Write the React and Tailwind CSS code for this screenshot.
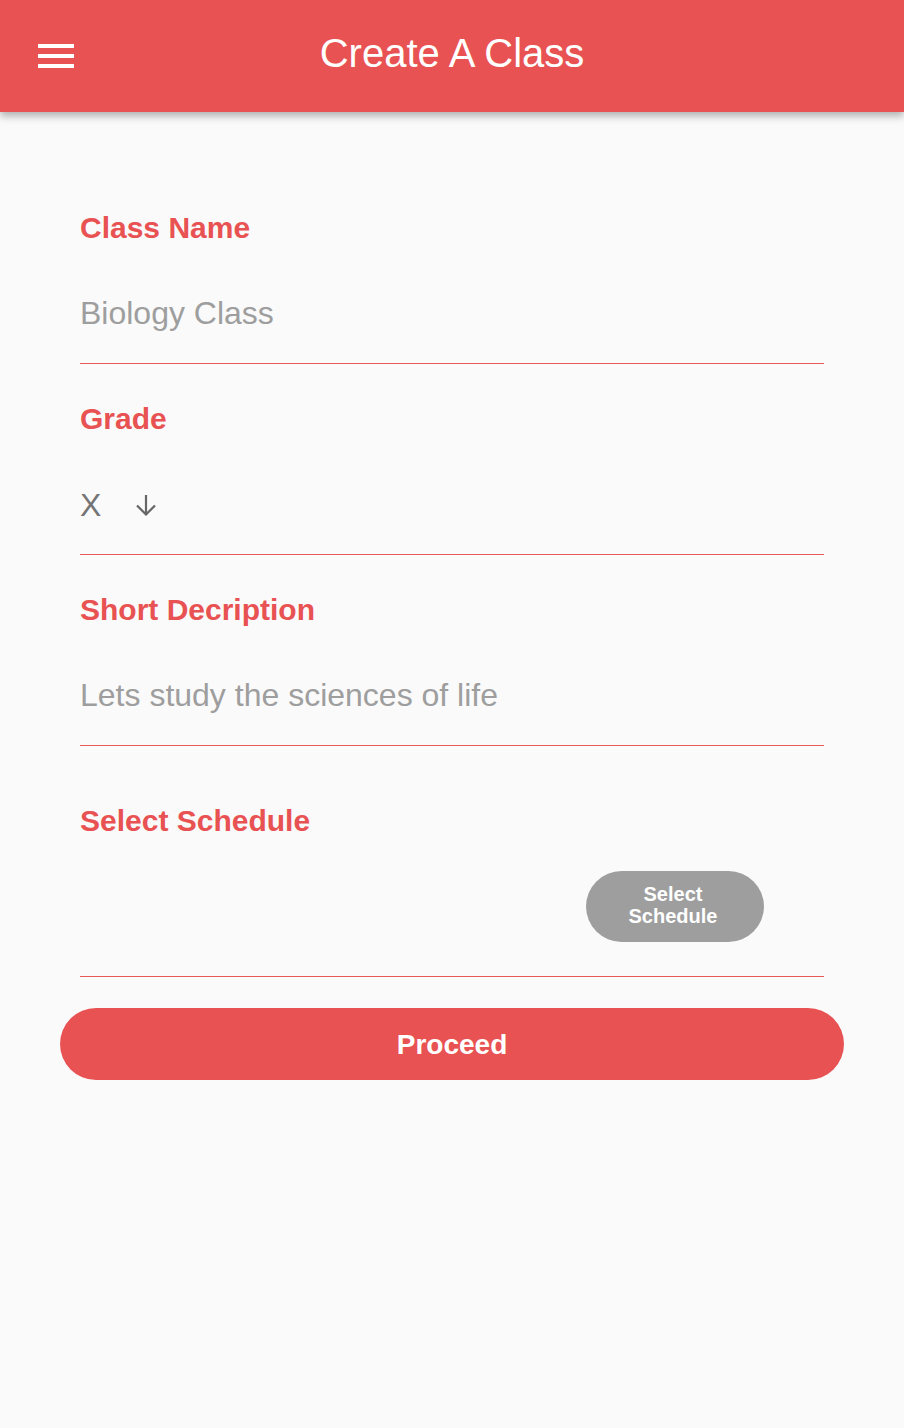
const font = { fontFamily: '"Liberation Sans", Arial, sans-serif' }

// one labelled field with a red underline
const Field = ({ label, children, className = '' }) => (
  <div className={`border-b border-[#e85a5a] ${className}`}>
    <div className="h-8 text-[30px] leading-8 font-bold text-[#e85252]">{label}</div>
    {children}
  </div>
)

const App = () => {
  return (
    <div className="min-h-[1428px] w-full bg-[#fafafa]" style={font}>
      {/* Barra superior */}
      <header className="relative h-[112px] bg-[#e85252] shadow-[0_4px_8px_rgba(0,0,0,0.3)] flex items-center justify-center">
        <button className="absolute left-[38px] top-[44px] flex flex-col gap-[6px]">
          <span className="block w-9 h-1 bg-white" />
          <span className="block w-9 h-1 bg-white" />
          <span className="block w-9 h-1 bg-white" />
        </button>
        <h1 className="text-[40px] leading-none text-white -mt-[7px]">Create A Class</h1>
      </header>

      <main className="px-20 pt-[100px]">
        <Field label="Class Name">
          <div className="pt-[51px] pb-8 text-[32px] leading-9 text-[#9e9e9e]">Biology Class</div>
        </Field>

        <Field label="Grade" className="mt-[39px]">
          <div className="pt-[52px] pb-[31px] h-[119px] flex items-center gap-[34px] text-[32px] leading-9 text-[#757575]">
            <span>X</span>
            <svg width="22" height="22" viewBox="0 0 22 22" fill="none" stroke="#666" strokeWidth="2.2">
              <path d="M11 1v19" />
              <path d="M2 11.5l9 9 9-9" />
            </svg>
          </div>
        </Field>

        <Field label="Short Decription" className="mt-[39px]">
          <div className="pt-[51px] pb-8 text-[32px] leading-9 text-[#9e9e9e]">Lets study the sciences of life</div>
        </Field>

        <Field label="Select Schedule" className="mt-[59px]">
          <div className="pt-[34px] pb-[34px] flex justify-end pr-[60px]">
            <button className="w-[178px] h-[71px] pb-1 pr-1 rounded-full bg-[#9e9e9e] text-white font-bold text-[20px] leading-[22px] flex items-center justify-center text-center">
              Select<br />Schedule
            </button>
          </div>
        </Field>

        <button className="mt-[31px] -mx-5 w-[784px] h-[72px] pt-[2px] rounded-full bg-[#e85252] text-white font-bold text-[28px] flex items-center justify-center">
          Proceed
        </button>
      </main>
    </div>
  )
}

export default App
